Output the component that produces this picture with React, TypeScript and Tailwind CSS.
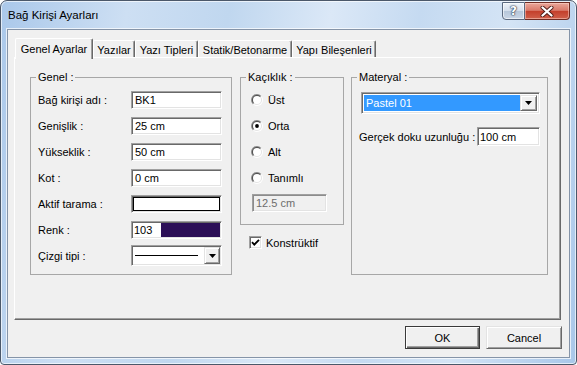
import React from "react";

const sunken =
  "border border-t-[#a0a0a0] border-l-[#a0a0a0] border-b-white border-r-white shadow-[inset_1px_1px_0_#696969,inset_-1px_-1px_0_#e3e3e3]";
const raised =
  "border border-t-[#e3e3e3] border-l-[#e3e3e3] border-b-[#696969] border-r-[#696969] shadow-[inset_1px_1px_0_#ffffff,inset_-1px_-1px_0_#a0a0a0]";

function Arrow() {
  return (
    <svg width="7" height="4" viewBox="0 0 7 4">
      <path d="M0 0H7L3.5 4Z" fill="#000" />
    </svg>
  );
}

function DropBtn({ w = 16 }: { w?: number }) {
  return (
    <div
      className={`${raised} bg-[#f0f0f0] h-full flex items-center justify-center shrink-0`}
      style={{ width: w }}
    >
      <Arrow />
    </div>
  );
}

function TextBox({ value, w }: { value: string; w: number }) {
  return (
    <div
      className={`${sunken} bg-white h-[18px] flex items-center pl-[3px] leading-[14px]`}
      style={{ width: w }}
    >
      {value}
    </div>
  );
}

function Radio({ checked }: { checked?: boolean }) {
  return (
    <svg width="12" height="12" viewBox="0 0 12 12">
      <defs>
        <linearGradient id="rg1" x1="0" y1="0" x2="1" y2="1">
          <stop offset="0.45" stopColor="#8a8a8a" />
          <stop offset="0.55" stopColor="#ffffff" />
        </linearGradient>
        <linearGradient id="rg2" x1="0" y1="0" x2="1" y2="1">
          <stop offset="0.45" stopColor="#505050" />
          <stop offset="0.55" stopColor="#e3e3e3" />
        </linearGradient>
      </defs>
      <circle cx="6" cy="6" r="6" fill="url(#rg1)" />
      <circle cx="6" cy="6" r="5" fill="url(#rg2)" />
      <circle cx="6" cy="6" r="4" fill="#ffffff" />
      {checked && <circle cx="6" cy="6" r="1.9" fill="#000" />}
    </svg>
  );
}

function Group({
  label,
  w,
  h,
  children,
  className = "",
}: {
  label: string;
  w: number;
  h: number;
  children?: React.ReactNode;
  className?: string;
}) {
  return (
    <div
      className={`relative border border-[#a7a7a7] shrink-0 ${className}`}
      style={{ width: w, height: h }}
    >
      <span className="absolute left-[5px] top-[-8px] px-[2px] bg-[#f0f0f0] leading-[14px]">
        {label}
      </span>
      {children}
    </div>
  );
}

function Row({ label, children, className = "h-[18px]" }: { label: string; children: React.ReactNode; className?: string }) {
  return (
    <div className={`flex items-center ${className}`}>
      <span className="w-[93px] leading-[14px]">{label}</span>
      {children}
    </div>
  );
}

function Tab({ label, w, selected }: { label: string; w: number; selected?: boolean }) {
  if (selected) {
    return (
      <div
        className="h-[21px] -mb-[2px] bg-[#f0f0f0] border-t border-l border-r border-t-white border-l-white border-r-[#696969] rounded-t-[2px] shadow-[inset_-1px_0_0_#a0a0a0] flex justify-center pt-[3px] leading-[14px] shrink-0 relative z-20"
        style={{ width: w }}
      >
        {label}
      </div>
    );
  }
  return (
    <div
      className="h-[17px] bg-[#f0f0f0] border-t border-l border-r border-t-white border-l-white border-r-[#696969] rounded-t-[2px] shadow-[inset_-1px_0_0_#a0a0a0] flex justify-center pt-[2px] leading-[14px] shrink-0"
      style={{ width: w }}
    >
      {label}
    </div>
  );
}

export default function App() {
  return (
    <div className="w-[577px] h-[365px] bg-white overflow-hidden font-['Liberation_Sans',Arial,sans-serif] text-[11px] text-black">
      <div className="w-[577px] h-[365px] rounded-t-[7px] rounded-b-[4px] border border-[#4b586a] shadow-[inset_0_0_0_1px_rgba(255,255,255,0.65)] bg-[linear-gradient(100deg,#aac8ea_0%,#cddff3_20%,#c0d7ef_36%,#dbe8f7_52%,#c5daf1_66%,#d4e4f5_80%,#a9c7e9_100%)] flex flex-col">
        {/* Title bar */}
        <div className="h-[28px] flex items-start shrink-0">
          <span className="ml-[7px] mt-[7px] leading-[14px] text-[11.5px] text-black">
            Bağ Kirişi Ayarları
          </span>
          <div className="ml-auto mr-[6px] mt-[1px] flex">
            <div className="w-[23px] h-[18px] rounded-bl-[4px] border border-[#5b6a80] bg-[linear-gradient(180deg,#eef3f9_0%,#d4dfec_48%,#b7c7da_52%,#c9d6e6_100%)] shadow-[inset_0_0_0_1px_rgba(255,255,255,0.6)] flex items-center justify-center">
              <span className="font-['DejaVu_Sans',sans-serif] font-bold text-[12px] leading-[12px] text-white [text-shadow:0_0_1px_#2a3a50,0_0_1px_#2a3a50,0_0_2px_#2a3a50]">
                ?
              </span>
            </div>
            <div className="w-[45px] h-[18px] rounded-br-[4px] border border-l-0 border-[#6e2b22] bg-[linear-gradient(180deg,#eaa79a_0%,#d97a6a_46%,#c4402c_52%,#d0604b_100%)] shadow-[inset_0_0_0_1px_rgba(255,220,210,0.5)] flex items-center justify-center">
              <svg width="14" height="11" viewBox="0 0 14 11">
                <path d="M2.5 1.5L11.5 9.5M11.5 1.5L2.5 9.5" stroke="#4a1a14" strokeWidth="4" strokeLinecap="round" />
                <path d="M2.5 1.5L11.5 9.5M11.5 1.5L2.5 9.5" stroke="#ffffff" strokeWidth="2.3" strokeLinecap="round" />
              </svg>
            </div>
          </div>
        </div>

        {/* Client area */}
        <div className="flex-1 mx-[6px] mb-[6px] border border-[#8594a8] shadow-[0_0_0_1px_rgba(255,255,255,0.7)] bg-[#f0f0f0] flex flex-col pt-[8px]">
          {/* Tabs */}
          <div className="flex items-end h-[19px] pl-[7px] relative z-10">
            <Tab label="Genel Ayarlar" w={78} selected />
            <Tab label="Yazılar" w={42} />
            <Tab label="Yazı Tipleri" w={63} />
            <Tab label="Statik/Betonarme" w={94} />
            <Tab label="Yapı Bileşenleri" w={84} />
          </div>

          {/* Panel */}
          <div className="ml-[6px] w-[547px] h-[263px] border border-t-white border-l-white border-b-[#696969] border-r-[#696969] shadow-[inset_-1px_-1px_0_#a0a0a0] flex items-start pl-[15px] pt-[19px] gap-[8px]">
            {/* Genel */}
            <Group label="Genel :" w={202} h={198}>
              <div className="flex flex-col gap-[8px] pl-[7px] pt-[13px]">
                <Row label="Bağ kirişi adı :">
                  <TextBox value="BK1" w={91} />
                </Row>
                <Row label="Genişlik :">
                  <TextBox value="25 cm" w={91} />
                </Row>
                <Row label="Yükseklik :">
                  <TextBox value="50 cm" w={91} />
                </Row>
                <Row label="Kot :">
                  <TextBox value="0 cm" w={91} />
                </Row>
                <Row label="Aktif tarama :">
                  <div className={`${sunken} bg-white w-[91px] h-[18px] p-[1px]`}>
                    <div className="w-full h-full border border-black bg-white" />
                  </div>
                </Row>
                <Row label="Renk :">
                  <div className={`${sunken} w-[91px] h-[18px] flex p-[1px]`}>
                    <div className="w-[28px] h-full bg-white flex items-center pl-[1px] leading-[14px]">103</div>
                    <div className="flex-1 h-full bg-[#2c0f57]" />
                  </div>
                </Row>
                <Row label="Çizgi tipi :" className="h-[21px] -mt-[2px]">
                  <div className={`${sunken} w-[91px] h-[21px] flex p-[1px] bg-white`}>
                    <div className="flex-1 h-full flex items-center pl-[2px] pr-[6px]">
                      <div className="w-full h-[1px] bg-black" />
                    </div>
                    <DropBtn w={16} />
                  </div>
                </Row>
              </div>
            </Group>

            {/* Kaçıklık */}
            <div className="flex flex-col shrink-0">
              <Group label="Kaçıklık :" w={104} h={148}>
                <div className="flex flex-col pl-[10px] pt-[15px]">
                  <div className="flex flex-col gap-[12px]">
                    {[
                      ["Üst", false],
                      ["Orta", true],
                      ["Alt", false],
                      ["Tanımlı", false],
                    ].map(([l, c]) => (
                      <div key={l as string} className="flex items-center h-[14px] gap-[5px]">
                        <Radio checked={c as boolean} />
                        <span className="leading-[14px]">{l as string}</span>
                      </div>
                    ))}
                  </div>
                  <div className="mt-[9px] ml-[1px] w-[75px] h-[18px] border border-t-[#a0a0a0] border-l-[#a0a0a0] border-b-white border-r-white shadow-[inset_1px_1px_0_#8c8c8c,inset_-1px_-1px_0_#e3e3e3] bg-[#f0f0f0] text-[#6d6d6d] flex items-center pl-[3px] leading-[14px]">
                    12.5 cm
                  </div>
                </div>
              </Group>
              <div className="mt-[11px] pl-[9px] flex items-center h-[13px] gap-[4px]">
                <div className={`${sunken} w-[13px] h-[13px] bg-white flex items-center justify-center`}>
                  <svg width="9" height="9" viewBox="0 0 9 9">
                    <path d="M1 4.2L3.3 6.6L8 1.8" stroke="#000" strokeWidth="1.8" fill="none" />
                  </svg>
                </div>
                <span className="leading-[14px]">Konstrüktif</span>
              </div>
            </div>

            {/* Materyal */}
            <Group label="Materyal :" w={197} h={198} className="-ml-[1px]">
              <div className="flex flex-col pl-[7px] pt-[14px]">
                <div className={`${sunken} ml-[2px] w-[179px] h-[22px] flex p-[2px] bg-white`}>
                  <div className="flex-1 h-full bg-[#3399ff] text-white flex items-center pl-[2px] leading-[14px]">
                    Pastel 01
                  </div>
                  <DropBtn w={17} />
                </div>
                <div className="mt-[13px] flex items-center h-[19px]">
                  <span className="w-[118px] leading-[14px]">Gerçek doku uzunluğu :</span>
                  <div className={`${sunken} bg-white w-[63px] h-[19px] flex items-center pl-[2px] leading-[14px]`}>
                    100 cm
                  </div>
                </div>
              </div>
            </Group>
          </div>

          {/* Buttons */}
          <div className="flex justify-end gap-[6px] pr-[7px] pt-[6px]">
            <button className="w-[75px] h-[23px] bg-[#f0f0f0] border border-[#3a3a3a] shadow-[inset_1px_1px_0_#ffffff,inset_-1px_-1px_0_#696969,inset_-2px_-2px_0_#a0a0a0] flex items-center justify-center leading-[14px]">
              OK
            </button>
            <button className="w-[76px] h-[23px] bg-[#f0f0f0] border border-t-[#e3e3e3] border-l-[#e3e3e3] border-b-[#696969] border-r-[#696969] shadow-[inset_1px_1px_0_#ffffff,inset_-1px_-1px_0_#a0a0a0] flex items-center justify-center leading-[14px]">
              Cancel
            </button>
          </div>
        </div>
      </div>
    </div>
  );
}
